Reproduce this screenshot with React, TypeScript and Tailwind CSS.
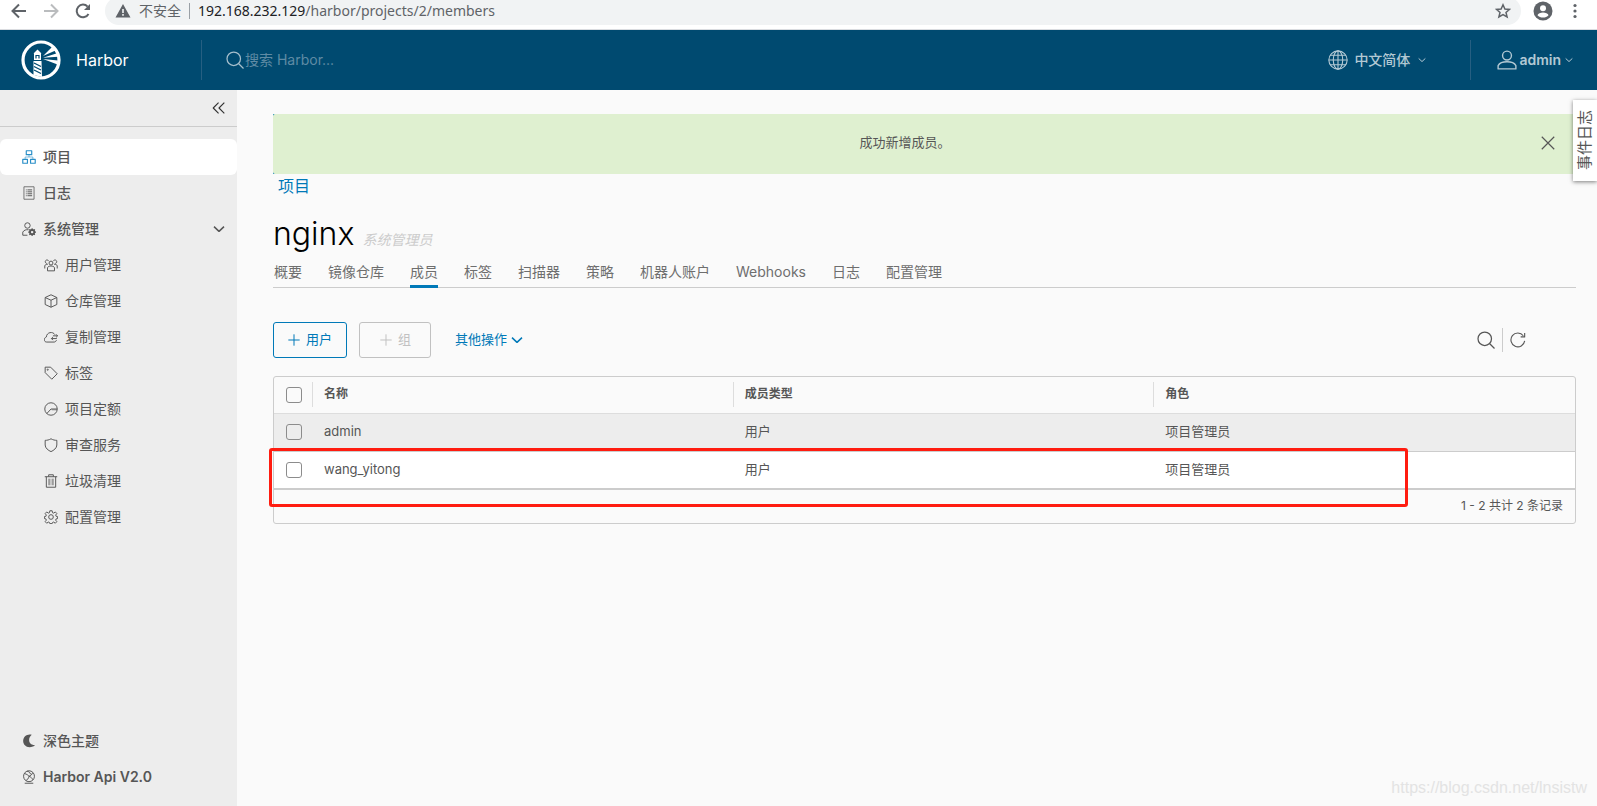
import { useState, type ReactNode } from "react";

interface IconProps {
  children: ReactNode;
  className?: string;
  width?: number;
}

// 36x36 line icon
function Icon({ children, className = "size-3.5", width = 2 }: IconProps) {
  return (
    <svg
      viewBox="0 0 36 36"
      className={`shrink-0 ${className}`}
      fill="none"
      stroke="currentColor"
      strokeWidth={width}
      strokeLinejoin="round"
      aria-hidden="true"
    >
      {children}
    </svg>
  );
}

const Chevron = ({ className }: { className: string }) => (
  <Icon className={className} width={4.5}>
    <path d="M3 11l15 14 15-14" />
  </Icon>
);

const SearchIcon = ({ className }: { className: string }) => (
  <Icon className={className} width={2.5}>
    <circle cx="15.5" cy="15.5" r="13.5" />
    <path d="M25.5 25.5L35 35" />
  </Icon>
);

const icons = {
  projects: (
    <>
      <path d="M11 2h14v10H11zM2 24h12v10H2zM22 24h12v10H22z" />
      <path d="M18 12v6M8 24v-6h20v6" strokeWidth="1.5" />
    </>
  ),
  logs: (
    <>
      <path d="M5 2h26v32H5z" />
      <path d="M10 10h2M10 15h2M10 20h2M10 25h2M14 10h12M14 15h12M14 20h12M14 25h12" strokeWidth="2.5" />
    </>
  ),
  admin: (
    <>
      <circle cx="14" cy="9" r="7" />
      <path d="M14 34H2v-8c3-5 8-7 15-6" />
      <circle cx="26" cy="26" r="5.5" strokeWidth="5" />
      <path d="M26 16v20M16 26h4M32 26h4M19 19l3 3M30 30l3 3M33 19l-3 3M22 30l-3 3" strokeWidth="3" />
      <circle cx="26" cy="26" r="3" fill="#ededed" stroke="none" />
    </>
  ),
  users: (
    <>
      <circle cx="18" cy="13" r="5" />
      <path d="M9 33v-8c2-6 16-6 18 0v8z" />
      <path d="M12 8a4.5 4.5 0 1 0-5 6M24 8a4.5 4.5 0 1 1 5 6M2 27v-7c1-3 4-4 8-4M34 27v-7c-1-3-4-4-8-4" />
    </>
  ),
  cube: (
    <>
      <path d="M18 2l15 7v18l-15 7-15-7V9z" />
      <path d="M3 9l15 7 15-7M18 16v18" />
    </>
  ),
  cloud: (
    <>
      <path d="M32 26c-1 3-3 5-6 5H7c-8 0-8-11-1-13 1-13 17-15 22-6" />
      <path d="M23 15h12M31 11l4 4-4 4M33 22H19M23 18l-4 4 4 4" />
    </>
  ),
  tag: (
    <>
      <path d="M3 3h14l17 17-14 14L3 17z" />
      <circle cx="9.5" cy="9.5" r="1.5" />
    </>
  ),
  quota: (
    <>
      <circle cx="18" cy="18" r="16" />
      <path d="M7 30l11-12h16" />
      <path d="M20 20h13" strokeWidth="3" opacity="0.5" />
    </>
  ),
  shield: <path d="M18 2c5 3 10 4 15 4v12c0 8-8 14-15 17C11 32 3 26 3 18V6c5 0 10-1 15-4z" />,
  trash: (
    <>
      <path d="M2 7h32M12 7V2h12v5M6 7v27h24V7" />
      <path d="M13 12v17M23 12v17" />
      <path d="M18 12v17" opacity="0.5" />
    </>
  ),
  gear: (
    <>
      <path d="M15 2h6l1 5 3 1 4-3 4 4-3 4 1 3 4 1v5l-4 1-1 3 3 4-4 4-4-3-3 1-1 3h-6l-1-3-3-1-4 3-4-4 3-4-1-3-4-1v-5l4-1 1-3-3-4 4-4 4 3 3-1z" />
      <circle cx="18" cy="18" r="6" />
    </>
  ),
  moon: (
    <path
      d="M25 2C13-1 3 7 3 18s11 20 25 14c3-1 4-2 5-4-15 1-20-16-8-26z"
      fill="currentColor"
      stroke="none"
    />
  ),
  api: (
    <>
      <circle cx="18" cy="16" r="14" />
      <path d="M7 34h22M6 9c7 2 9 4 12 7 4-1 8-4 9-9M18 16c-1 6-4 9-8 11M18 16c5 2 8 5 10 9M13 3c4 1 8 3 9 8" />
    </>
  ),
};

type IconName = keyof typeof icons;

const SUB_MENU: { label: string; icon: IconName }[] = [
  { label: "用户管理", icon: "users" },
  { label: "仓库管理", icon: "cube" },
  { label: "复制管理", icon: "cloud" },
  { label: "标签", icon: "tag" },
  { label: "项目定额", icon: "quota" },
  { label: "审查服务", icon: "shield" },
  { label: "垃圾清理", icon: "trash" },
  { label: "配置管理", icon: "gear" },
];

const TABS = ["概要", "镜像仓库", "成员", "标签", "扫描器", "策略", "机器人账户", "Webhooks", "日志", "配置管理"];

const MEMBERS = [
  { name: "admin", type: "用户", role: "项目管理员" },
  { name: "wang_yitong", type: "用户", role: "项目管理员" },
];

function BrowserBar() {
  return (
    <div className="flex h-[30px] items-center overflow-hidden border-b border-[#dadce0] bg-white pb-[7px] pl-[11px] text-[#5f6368]">
      <button aria-label="后退">
        <svg viewBox="0 0 16 16" className="size-4" fill="none" stroke="currentColor" strokeWidth="2">
          <path d="M15 8H2M8 1.5L1.5 8 8 14.5" />
        </svg>
      </button>
      <button aria-label="前进" className="ml-4 text-[#babcbe]">
        <svg viewBox="0 0 16 16" className="size-4" fill="none" stroke="currentColor" strokeWidth="2">
          <path d="M1 8h13M8 1.5L14.5 8 8 14.5" />
        </svg>
      </button>
      <button aria-label="刷新" className="ml-4">
        <svg viewBox="0 0 16 16" className="size-4" fill="none" stroke="currentColor" strokeWidth="2">
          <path d="M13.5 11A6.3 6.3 0 1 1 12.6 3.6" />
          <path d="M15 1v6H9z" fill="currentColor" stroke="none" />
        </svg>
      </button>
      <div className="ml-3.5 flex h-7 flex-1 shrink-0 items-center rounded-full bg-[#f1f3f4] pr-2.5 pl-2.5">
        <svg viewBox="0 0 16 16" className="size-4" fill="currentColor">
          <path fillRule="evenodd" d="M8 1l7.5 13.5H.5zM7.2 6v4h1.6V6zm0 5v1.7h1.6V11z" />
        </svg>
        <span className="ml-2 text-sm">不安全</span>
        <span className="mx-2 h-4 w-px bg-[#9aa0a6]" />
        <span className="font-['Noto_Sans','Noto_Sans_CJK_SC',sans-serif] text-sm">
          <span className="text-[#202124]">192.168.232.129</span>/harbor/projects/2/members
        </span>
        <button aria-label="收藏" className="ml-auto">
          <svg viewBox="0 0 16 16" className="size-4" fill="none" stroke="currentColor" strokeWidth="1.5">
            <path d="M8 1.8l1.9 4.2 4.6.4-3.5 3 1.1 4.5L8 11.500l-4.100 2.400L5 9.400l-3.500-3 4.600-.4z" />
          </svg>
        </button>
      </div>
      <button aria-label="用户" className="ml-3">
        <svg viewBox="0 0 20 20" className="size-5">
          <circle cx="10" cy="10" r="9.5" fill="currentColor" />
          <circle cx="10" cy="7.2" r="3" fill="#fff" />
          <path d="M4.5 14.2c1-3.600 10-3.600 11 0-2.500 3.200-8.500 3.200-11 0z" fill="#fff" />
        </svg>
      </button>
      <button aria-label="更多" className="mr-3.5 ml-3.5">
        <svg viewBox="0 0 16 16" className="size-4" fill="currentColor">
          <circle cx="8" cy="2.5" r="1.6" />
          <circle cx="8" cy="8" r="1.6" />
          <circle cx="8" cy="13.5" r="1.6" />
        </svg>
      </button>
    </div>
  );
}

function HarborLogo() {
  return (
    <svg viewBox="0 0 40 40" className="size-10" aria-hidden="true">
      <circle cx="20" cy="20" r="18" fill="none" stroke="#fff" strokeWidth="3.2" />
      <path d="M16.500 9.500l4 4h-8zM13 13.500h7V20h-7zM12.500 21h8l.5 16-8.500-2z" fill="#fff" />
      <path d="M15 18.500v-3h3v3" fill="none" stroke="#004a70" strokeWidth="1.2" />
      <path d="M13 23l7 3.500M13 26.500l7 3.500M13 30l7 3.500" fill="none" stroke="#004a70" strokeWidth="1.3" />
      <path d="M22 16l9-9 3.500 3.500zM22 17.800l14-4.500 1 3.500zM22 19l15 1.500-.5 4z" fill="#fff" />
    </svg>
  );
}

function Header() {
  return (
    <header className="flex h-15 items-center bg-[#004a70] text-[#b3c9d4]">
      <a href="#" className="flex items-center pl-[21px] text-white">
        <HarborLogo />
        <span className="ml-[15px] w-[125px] text-base">Harbor</span>
      </a>
      <div className="h-10 w-px bg-[#265f82]" />
      <label className="ml-6 flex items-center text-[#a6bfcc]">
        <SearchIcon className="mr-px size-[18px]" />
        <input
          aria-label="搜索 Harbor"
          placeholder="搜索 Harbor..."
          className="w-60 bg-transparent text-sm outline-none placeholder:text-[#5f8ba4]"
        />
      </label>
      <button className="ml-auto flex items-center text-sm font-medium">
        <Icon className="mr-1.5 size-5" width={2}>
          <circle cx="18" cy="18" r="16.5" />
          <ellipse cx="18" cy="18" rx="8.5" ry="16.5" />
          <path d="M18 1v34M1.5 18h33M4 9.5h28M4 26.5h28" />
        </Icon>
        中文简体
        <Chevron className="ml-2 size-2" />
      </button>
      <div className="ml-11 h-10 w-px bg-[#265f82]" />
      <button className="ml-[26px] flex items-center pr-6 text-sm font-semibold">
        <Icon className="mr-0.5 size-5" width={2.5}>
          <circle cx="18" cy="10" r="8" />
          <path d="M2 34v-6c5-9 27-9 32 0v6z" />
        </Icon>
        admin
        <Chevron className="ml-1 size-2" />
      </button>
    </header>
  );
}

function Sidebar() {
  return (
    <nav className="flex w-[237px] shrink-0 flex-col bg-[#ededed] pb-[11px] text-sm text-[#565656]">
      <div className="flex h-[37px] items-center justify-end border-b border-[#ccc] pr-2.5">
        <button aria-label="收起" className="text-[#313131]">
          <Icon className="size-4" width={2.5}>
            <path d="M17 6L5 18l12 12M30 6L18 18l12 12" />
          </Icon>
        </button>
      </div>
      <a href="#" className="mt-3 flex h-9 items-center gap-[7px] rounded-md bg-white pl-[22px] font-medium">
        <Icon className="size-3.5 text-[#2a8fc8]" width={3}>{icons.projects}</Icon>
        项目
      </a>
      <a href="#" className="flex h-9 items-center gap-[7px] pl-[22px] font-medium">
        <Icon>{icons.logs}</Icon>
        日志
      </a>
      <button className="flex h-9 items-center gap-[7px] pr-3 pl-[22px] font-medium">
        <Icon width={2.5}>{icons.admin}</Icon>
        系统管理
        <Chevron className="ml-auto size-3" />
      </button>
      {SUB_MENU.map(({ label, icon }) => (
        <a key={label} href="#" className="flex h-9 items-center gap-[7px] pl-11">
          <Icon width={2.5}>{icons[icon]}</Icon>
          {label}
        </a>
      ))}
      <button className="mt-auto flex h-9 items-center gap-[7px] pl-[22px] font-medium">
        <Icon>{icons.moon}</Icon>
        深色主题
      </button>
      <a href="#" className="flex h-9 items-center gap-[7px] pl-[22px] font-semibold">
        <Icon width={2.5}>{icons.api}</Icon>
        Harbor Api V2.0
      </a>
    </nav>
  );
}

const Plus = () => (
  <Icon className="size-3" width={3}>
    <path d="M18 1v34M1 18h34" />
  </Icon>
);

const checkbox =
  "block size-4 appearance-none rounded-[3px] border border-[#8c8c8c] checked:bg-[#0079b8]";

function MemberTable() {
  const [selected, setSelected] = useState<string[]>([]);
  const toggle = (name: string) =>
    setSelected((s) => (s.includes(name) ? s.filter((n) => n !== name) : [...s, name]));

  return (
    <div className="relative mt-[18px] rounded-[3px] border border-[#ccc]">
      <table className="w-full table-fixed border-collapse text-left text-[13px]">
        <thead>
          <tr className="h-9 border-b border-[#ddd] text-xs">
            <th className="w-[39px] p-0">
              <div className="flex h-[25px] items-center border-r border-[#ddd] pl-3">
                <input
                  type="checkbox"
                  aria-label="全选"
                  className={checkbox}
                  checked={selected.length === MEMBERS.length}
                  onChange={(e) => setSelected(e.target.checked ? MEMBERS.map((m) => m.name) : [])}
                />
              </div>
            </th>
            <th className="p-0">
              <div className="h-[25px] border-r border-[#ddd] pl-[11px] leading-6 font-bold">名称</div>
            </th>
            <th className="p-0">
              <div className="h-[25px] border-r border-[#ddd] pl-[11px] leading-6 font-bold">成员类型</div>
            </th>
            <th className="p-0">
              <div className="h-[25px] pl-[11px] leading-6 font-bold">角色</div>
            </th>
          </tr>
        </thead>
        <tbody>
          {MEMBERS.map((m) => (
            <tr key={m.name} className="h-[37px] border-b border-[#ccc] bg-white first:h-[38px] first:bg-[#ededed]">
              <td className="py-0 pr-0 pl-3">
                <input
                  type="checkbox"
                  aria-label={m.name}
                  className={checkbox}
                  checked={selected.includes(m.name)}
                  onChange={() => toggle(m.name)}
                />
              </td>
              <td className="py-0 pr-0 pl-[11px]">{m.name}</td>
              <td className="py-0 pr-0 pl-[11px]">{m.type}</td>
              <td className="py-0 pr-0 pl-[11px]">{m.role}</td>
            </tr>
          ))}
        </tbody>
      </table>
      <div className="flex h-[34px] items-center justify-end border-t border-[#ccc] pr-3 text-xs">
        1 - 2 共计 2 条记录
      </div>
      <div className="pointer-events-none absolute top-[71px] right-[167px] -left-[5px] h-[59px] rounded-[3px] border-3 border-[#ff1c10]" />
    </div>
  );
}

export default function App() {
  return (
    <div className="relative flex min-h-screen flex-col bg-[#fafafa] font-['Inter','Noto_Sans_CJK_SC',sans-serif] text-[#565656]">
      <BrowserBar />
      <Header />
      <div className="flex flex-1">
        <Sidebar />
        <main className="min-w-0 flex-1 pt-6 pr-[21px] pl-9">
          <div className="bg-[#0079b8]">
            <div role="alert" className="flex h-15 items-center rounded-l-[2px] bg-[#dff0d0] pr-[21px] pb-0.5 text-[13px]">
              <span className="flex-1 pr-1 text-center">成功新增成员。</span>
              <button aria-label="关闭">
                <Icon className="size-3.5" width={3}>
                  <path d="M2 2l32 32M34 2L2 34" />
                </Icon>
              </button>
            </div>
          </div>
          <a href="#" className="ml-[5px] block w-fit text-base leading-6 text-[#0079b8]">
            项目
          </a>
          <div className="mt-4 flex items-baseline gap-2">
            <h1 className="text-[32px] leading-10 font-light text-black">nginx</h1>
            <span className="text-sm text-[#ccc] italic">系统管理员</span>
          </div>
          <div className="flex h-[34px] gap-[26px] border-b border-[#ccc] pl-px text-sm text-[#6e6e6e]">
            {TABS.map((tab) => (
              <button
                key={tab}
                className={
                  tab === "成员"
                    ? "-mb-px border-b-3 border-[#0079b8] pt-[5px]"
                    : "-mb-px border-b-3 border-transparent pt-[5px]"
                }
              >
                {tab}
              </button>
            ))}
          </div>
          <div className="mt-[34px] flex h-9 items-center text-[13px] text-[#0079b8]">
            <button className="flex h-9 items-center gap-1.5 rounded-[3px] border border-[#0079b8] px-3.5">
              <Plus />
              用户
            </button>
            <button
              disabled
              className="ml-3 flex h-9 items-center gap-1.5 rounded-[3px] border border-[#c1c1c1] pr-[19px] pl-5 text-[#c1c1c1]"
            >
              <Plus />组
            </button>
            <button className="ml-6 flex items-center gap-1">
              其他操作
              <Chevron className="size-3" />
            </button>
            <div className="mr-[50px] ml-auto flex items-center text-[#565656]">
              <button aria-label="搜索">
                <SearchIcon className="size-[18px]" />
              </button>
              <div className="mx-[7px] h-6 w-px bg-[#ccc]" />
              <button aria-label="刷新">
                <Icon className="size-4" width={2.5}>
                  <path d="M33 20A15.5 15.5 0 1 1 30 8.5M33 2v9h-9" />
                </Icon>
              </button>
            </div>
          </div>
          <MemberTable />
        </main>
      </div>
      <button className="absolute top-[100px] right-0 flex h-[81px] w-6 items-center justify-center bg-white text-[15px] leading-6 shadow-[0_1px_4px_rgba(0,0,0,0.5)]">
        <span className="rotate-180 [text-orientation:sideways] [writing-mode:vertical-rl]">事件日志</span>
      </button>
      <div className="absolute right-2.5 bottom-1.5 font-['Liberation_Sans',sans-serif] text-base text-[#e3e3e3]">
        https://blog.csdn.net/lnsistw
      </div>
    </div>
  );
}
